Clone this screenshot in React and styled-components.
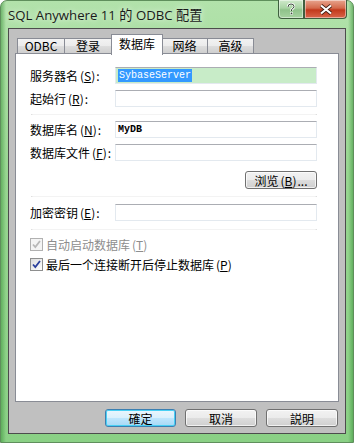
import React from "react";
import styled, { createGlobalStyle } from "styled-components";

const GlobalStyle = createGlobalStyle`
  html, body { margin: 0; padding: 0; background: #ffffff; }
  body { font-family: "Noto Sans CJK SC", "Liberation Sans", sans-serif; font-size: 12px; }
  * { box-sizing: border-box; }
`;

const Window = styled.div`
  width: 354px;
  height: 443px;
  display: flex;
  flex-direction: column;
  padding: 0 7px 8px 7px;
  border-radius: 7px 7px 0 0;
  border: 1px solid #5f8f5c;
  background:
    linear-gradient(90deg, rgba(50,140,50,0.5) 0, rgba(60,140,60,0) 5px, rgba(60,140,60,0) calc(100% - 5px), rgba(50,140,50,0.5) 100%),
    linear-gradient(180deg, #b2e2ab 0, #98d691 40%, #8ad085 100%);
`;

const TitleBar = styled.div`
  height: 27px;
  display: flex;
  align-items: flex-start;
  margin-right: -1px;
`;

const Title = styled.div`
  padding-top: 4px;
  font-family: "Open Sans", "Noto Sans CJK SC", sans-serif;
  font-size: 13.2px;
  color: #1a1a1a;
  text-shadow: 0 0 6px rgba(255,255,255,0.9);
`;

const Caption = styled.div`
  margin-left: auto;
  display: flex;
  margin-top: -1px;
`;

const CapButton = styled.div`
  width: ${p => p.$w}px;
  height: 19px;
  display: flex;
  align-items: center;
  justify-content: center;
  border: 1px solid #3f5f3f;
  border-top: none;
  border-radius: ${p => p.$r};
  background: ${p => p.$red
    ? "linear-gradient(180deg, #e8a58e 0, #d46a4c 45%, #c2391c 55%, #d9664a 100%)"
    : "linear-gradient(180deg, #cfe9cb 0, #a9d4a4 45%, #8fc28a 55%, #a6d3a0 100%)"};
  box-shadow: inset 0 0 0 1px rgba(255,255,255,0.45);
`;

const Client = styled.div`
  flex: 1;
  display: flex;
  flex-direction: column;
  border: 1px solid #4c4c4c;
  background: #c0c0c0;
  padding: 5px 6px 0 6px;
`;

const TabStrip = styled.div`
  display: flex;
  align-items: flex-end;
  height: 20px;
  padding-left: 2px;
  position: relative;
  z-index: 1;
`;

const Tab = styled.div`
  width: ${p => p.$w}px;
  height: ${p => (p.$active ? 21 : 16)}px;
  margin-left: ${p => (p.$active ? -1 : 0)}px;
  margin-right: ${p => (p.$active ? -1 : 0)}px;
  margin-bottom: ${p => (p.$active ? -1 : 0)}px;
  border: 1px solid #898c95;
  border-bottom: ${p => (p.$active ? "none" : "1px solid #898c95")};
  border-left: ${p => (p.$first || p.$active ? "1px solid #898c95" : "none")};
  background: ${p => (p.$active ? "#ffffff" : "linear-gradient(180deg, #f2f2f2 0, #ebebeb 50%, #dddddd 51%, #cfcfcf 100%)")};
  display: flex;
  justify-content: center;
  align-items: ${p => (p.$active ? "flex-start" : "center")};
  padding-top: ${p => (p.$active ? 2 : 0)}px;
  font-size: 12px;
  line-height: 14px;
  color: #000;
  position: relative;
  z-index: ${p => (p.$active ? 2 : 1)};
`;

const Panel = styled.div`
  height: 349px;
  margin-top: -1px;
  border: 1px solid #898c95;
  background: #ffffff;
  padding: 13px 0 0 14px;
  display: flex;
  flex-direction: column;
`;

const Row = styled.div`
  display: flex;
  align-items: center;
  height: 17px;
  margin-top: ${p => p.$mt || 0}px;
`;

const Label = styled.div`
  width: 85px;
  font-size: 12px;
  color: #000;
  white-space: nowrap;
  line-height: 14px;
`;

const Field = styled.div`
  width: 202px;
  height: 17px;
  border: 1px solid #e3e9ef;
  border-top-color: #abadb3;
  background: ${p => (p.$fill ? "#c8ecc8" : "#ffffff")};
  display: flex;
  align-items: center;
  padding-left: 2px;
  font-family: "Liberation Mono", monospace;
  font-size: 10px;
  font-weight: ${p => (p.$bold ? "bold" : "normal")};
  color: #000;
`;

const Selected = styled.span`
  background: #3399ff;
  color: #ffffff;
  line-height: 13px;
  padding: 0 1px;
`;

const Divider = styled.div`
  width: 286px;
  height: 1px;
  margin-left: 1px;
  margin-top: ${p => p.$mt}px;
  background: linear-gradient(90deg, #d8d8d8 0, #f3f3f3 2px, #f3f3f3 calc(100% - 2px), #d8d8d8 100%);
`;

const RightRow = styled.div`
  width: 287px;
  display: flex;
  justify-content: flex-end;
  margin-top: ${p => p.$mt}px;
`;

const Button = styled.div`
  width: ${p => p.$w || 71}px;
  height: 18px;
  display: flex;
  align-items: center;
  justify-content: center;
  border: 1px solid ${p => (p.$default ? "#3c7fb1" : "#707070")};
  border-radius: 3px;
  background: ${p => (p.$default
    ? "linear-gradient(180deg, #eaf6fd 0, #d9f0fc 50%, #bee6fd 51%, #a7d9f5 100%)"
    : "linear-gradient(180deg, #f2f2f2 0, #ebebeb 50%, #dddddd 51%, #cfcfcf 100%)")};
  box-shadow: inset 0 0 0 1px ${p => (p.$default ? "#48d0f4" : "rgba(255,255,255,0.7)")};
  font-size: 12px;
  color: #000;
`;

const CheckRow = styled.div`
  display: flex;
  align-items: center;
  height: 13px;
  margin-top: ${p => p.$mt}px;
  color: ${p => (p.$disabled ? "#8d8d8d" : "#000")};
  font-size: 12px;
`;

const Box = styled.div`
  width: 13px;
  height: 13px;
  border: 1px solid ${p => (p.$disabled ? "#b1b1b1" : "#8e8f8f")};
  background: ${p => (p.$disabled ? "#f4f4f4" : "linear-gradient(135deg, #dcdcdc 0, #ffffff 100%)")};
  margin-right: 3px;
  display: flex;
  align-items: center;
  justify-content: center;
`;

const Mnemonic = styled.span`
  margin-left: 2px;
  margin-right: 1px;
`;

const Footer = styled.div`
  display: flex;
  justify-content: flex-end;
  gap: 9px;
  margin-top: 7px;
  padding-right: 1px;
`;

const Check = ({ color }) => (
  <svg width="9" height="9" viewBox="0 0 9 9">
    <path d="M1 4.5 L3.3 7 L8 1" fill="none" stroke={color} strokeWidth="1.8" />
  </svg>
);

const Key = ({ k }) => (
  <Mnemonic>(<u>{k}</u>)</Mnemonic>
);

export default function App() {
  return (
    <>
      <GlobalStyle />
      <Window>
        <TitleBar>
          <Title>SQL Anywhere 11 的 ODBC 配置</Title>
          <Caption>
            <CapButton $w={26} $r="0 0 0 4px">
              <svg width="10" height="12" viewBox="0 0 10 12">
                <path d="M2 4 Q2 1 5 1 Q8 1 8 3.5 Q8 5 5.5 6.5 L5.5 8" fill="none" stroke="#ffffff" strokeWidth="2.2" />
                <path d="M2 4 Q2 1 5 1 Q8 1 8 3.5 Q8 5 5.5 6.5 L5.5 8" fill="none" stroke="#3a4a3a" strokeWidth="1" />
                <rect x="4.3" y="9.2" width="2.4" height="2.4" fill="#3a4a3a" stroke="#fff" strokeWidth="0.6" />
              </svg>
            </CapButton>
            <CapButton $w={43} $r="0 0 4px 0" $red>
              <svg width="14" height="11" viewBox="0 0 14 11">
                <path d="M2 1.5 L12 9.5 M12 1.5 L2 9.5" stroke="#3b1a10" strokeWidth="3.6" />
                <path d="M2 1.5 L12 9.5 M12 1.5 L2 9.5" stroke="#ffffff" strokeWidth="2.2" />
              </svg>
            </CapButton>
          </Caption>
        </TitleBar>
        <Client>
          <TabStrip>
            <Tab $w={48} $first>ODBC</Tab>
            <Tab $w={47}>登录</Tab>
            <Tab $w={52} $active>数据库</Tab>
            <Tab $w={46}>网络</Tab>
            <Tab $w={46}>高级</Tab>
          </TabStrip>
          <Panel>
            <Row>
              <Label>服务器名<Key k="S" />:</Label>
              <Field $fill><Selected>SybaseServer</Selected></Field>
            </Row>
            <Row $mt={6}>
              <Label>起始行<Key k="R" />:</Label>
              <Field />
            </Row>
            <Divider $mt={7} />
            <Row $mt={6}>
              <Label>数据库名<Key k="N" />:</Label>
              <Field $bold>MyDB</Field>
            </Row>
            <Row $mt={6}>
              <Label>数据库文件<Key k="F" />:</Label>
              <Field />
            </Row>
            <RightRow $mt={10}>
              <Button $w={72}>浏览<Key k="B" />...</Button>
            </RightRow>
            <Divider $mt={7} />
            <Row $mt={7}>
              <Label>加密密钥<Key k="E" />:</Label>
              <Field />
            </Row>
            <Divider $mt={8} />
            <CheckRow $mt={8} $disabled>
              <Box $disabled><Check color="#b8b8b8" /></Box>
              自动启动数据库<Key k="T" />
            </CheckRow>
            <CheckRow $mt={7}>
              <Box><Check color="#2a3f9c" /></Box>
              最后一个连接断开后停止数据库<Key k="P" />
            </CheckRow>
          </Panel>
          <Footer>
            <Button $default>確定</Button>
            <Button $w={72}>取消</Button>
            <Button $w={72}>説明</Button>
          </Footer>
        </Client>
      </Window>
    </>
  );
}
